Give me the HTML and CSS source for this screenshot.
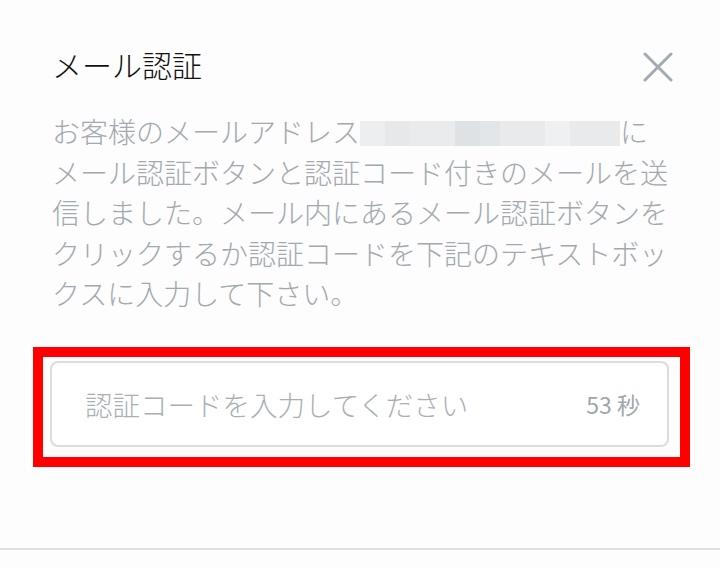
FILE: index.html
```html
<!DOCTYPE html>
<html lang="ja">
<head>
<meta charset="UTF-8">
<meta name="viewport" content="width=device-width, initial-scale=1.0">
<title>メール認証</title>
<link rel="stylesheet" href="styles.css">
</head>
<body>
    <div class="dialog">
        <div class="dialog-header">
            <h1 class="dialog-title">メール認証</h1>
            <button class="close-btn" aria-label="閉じる">
                <svg width="30" height="30" viewBox="0 0 30 30">
                    <path d="M2 2 L28 28 M28 2 L2 28" stroke="#a3abb2" stroke-width="3" stroke-linecap="round" fill="none"/>
                </svg>
            </button>
        </div>

        <p class="dialog-text">
            お客様のメールアドレス<span class="masked"></span>に<br>
            メール認証ボタンと認証コード付きのメールを送<br>
            信しました。メール内にあるメール認証ボタンを<br>
            クリックするか認証コードを下記のテキストボッ<br>
            クスに入力して下さい。
        </p>

        <div class="code-field">
            <input type="text" class="code-input" placeholder="認証コードを入力してください">
            <span class="countdown">53 秒</span>
            <div class="highlight"></div>
        </div>
    </div>
    <div class="footer-line"></div>
</body>
</html>
```

FILE: styles.css
```css
body {
    margin: 0;
    background-color: #fdfdfd;
    font-family: "Noto Sans CJK JP", "Noto Sans", sans-serif;
}
.dialog {
    padding: 42px 51px 0 50px;
    height: 503px;
    box-sizing: border-box;
}
.dialog-header {
    display: flex;
    justify-content: space-between;
    align-items: center;
    height: 44px;
    padding-left: 2px;
}
.dialog-title {
    margin: 0;
    font-size: 30px;
    font-weight: 300;
    color: #111;
    line-height: 44px;
}
.close-btn {
    border: none;
    background: none;
    padding: 0;
    margin-right: -4px;
    margin-top: 6px;
    width: 30px;
    height: 30px;
}
.dialog-text {
    margin: 25px 0 0 0;
    padding-left: 2px;
    font-size: 28px;
    font-weight: 300;
    line-height: 40.5px;
    color: #a2a9af;
    white-space: nowrap;
}
.masked {
    display: inline-block;
    width: 260px;
    height: 25px;
    vertical-align: -3px;
    background: linear-gradient(to right,
        #eceeef 0, #eceeef 25px,
        #e6e8ea 25px, #e6e8ea 50px,
        #e9ebec 50px, #e9ebec 95px,
        #dfe2e4 95px, #dfe2e4 120px,
        #e3e6e8 120px, #e3e6e8 140px,
        #e8eaeb 140px, #e8eaeb 185px,
        #eef0f1 185px, #eef0f1 210px,
        #e8eaec 210px);
}
.code-field {
    position: relative;
    margin-top: 47px;
    height: 86px;
}
.code-input {
    width: 100%;
    height: 86px;
    box-sizing: border-box;
    border: 2px solid #d9dde0;
    border-radius: 8px;
    padding: 0 100px 0 33px;
    font-family: inherit;
    font-size: 27.5px;
    font-weight: 300;
    background: #fff;
    outline: none;
}
.code-input::placeholder {
    color: #a9afb4;
}
.countdown {
    position: absolute;
    right: 29px;
    top: 0;
    line-height: 86px;
    font-size: 23px;
    color: #a0a6ac;
}
.highlight {
    position: absolute;
    left: -17px;
    top: -14px;
    width: 657px;
    height: 120px;
    box-sizing: border-box;
    border: 10px solid #ff0000;
    pointer-events: none;
}
.footer-line {
    height: 2px;
    margin-top: 45px;
    background-color: #e0e0e0;
}
```
